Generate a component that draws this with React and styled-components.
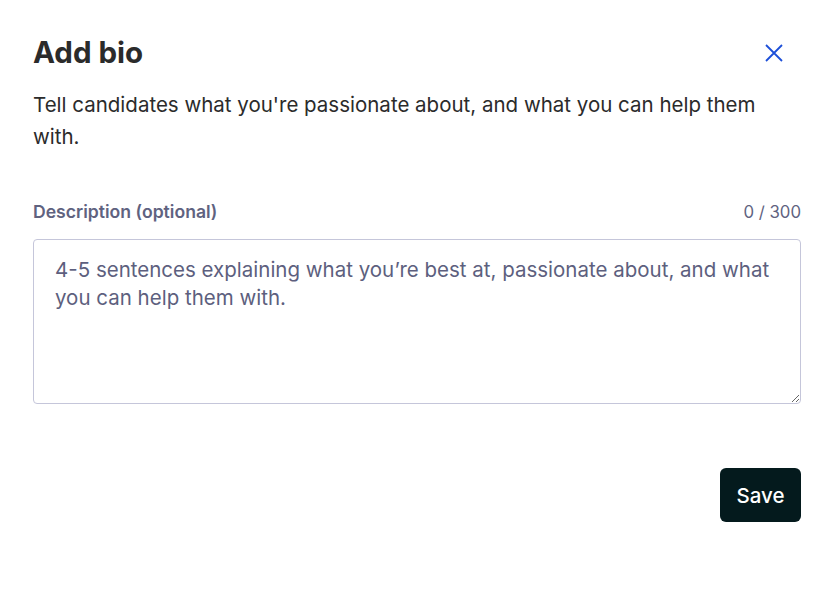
import React, { useState } from "react";
import styled, { createGlobalStyle } from "styled-components";

const GlobalStyle = createGlobalStyle`
  body {
    margin: 0;
    background: #ffffff;
    font-family: Inter, "Noto Sans", sans-serif;
  }
`;

const Modal = styled.div`
  width: 828px;
  height: 600px;
  box-sizing: border-box;
  padding: 30px 27px 0 33px;
  display: flex;
  flex-direction: column;
  background: #fff;
`;

const Header = styled.div`
  display: flex;
  align-items: center;
  justify-content: space-between;
  height: 44px;
`;

const Title = styled.h1`
  margin: 0;
  font-size: 29.5px;
  font-weight: 700;
  color: #2b2b2b;
`;

const CloseButton = styled.button`
  width: 28px;
  height: 28px;
  margin-right: 13px;
  margin-top: 2px;
  border: none;
  background: none;
  padding: 0;
  display: flex;
  align-items: center;
  justify-content: center;
  cursor: pointer;
`;

const Intro = styled.p`
  margin: 15px 0 0;
  font-size: 20.5px;
  line-height: 32px;
  color: #2b2b2b;
  max-width: 740px;
`;

const FieldHead = styled.div`
  display: flex;
  justify-content: space-between;
  align-items: baseline;
  margin-top: 45px;
`;

const Label = styled.label`
  font-size: 17.6px;
  font-weight: 600;
  color: #60627f;
`;

const Counter = styled.span`
  font-size: 16.8px;
  color: #60627f;
  margin-top: 4px;
`;

const TextArea = styled.textarea`
  margin-top: 17px;
  height: 165px;
  box-sizing: border-box;
  padding: 16px 21px;
  border: 1px solid #c5c6da;
  border-radius: 4px;
  font-family: Inter, "Noto Sans", sans-serif;
  font-size: 20.5px;
  line-height: 28px;
  color: #2b2b2b;
  resize: vertical;
  outline: none;
  &::placeholder {
    color: #5d5f7e;
  }
`;

const Actions = styled.div`
  display: flex;
  justify-content: flex-end;
  margin-top: 64px;
`;

const SaveButton = styled.button`
  width: 81px;
  height: 54px;
  border: none;
  border-radius: 6px;
  background: #041a1d;
  color: #ffffff;
  font-family: Inter, "Noto Sans", sans-serif;
  font-size: 20.5px;
  font-weight: 500;
  cursor: pointer;
`;

const App = () => {
  const [bio, setBio] = useState("");

  return (
    <>
      <GlobalStyle />
      <Modal>
        <Header>
          <Title>Add bio</Title>
          <CloseButton aria-label="Close">
            <svg width="20" height="20" viewBox="0 0 20 20" fill="none">
              <path d="M2 2L18 18M18 2L2 18" stroke="#1c4fd8" strokeWidth="1.8" />
            </svg>
          </CloseButton>
        </Header>
        <Intro>
          Tell candidates what you're passionate about, and what you can help them with.
        </Intro>
        <FieldHead>
          <Label htmlFor="bio">Description (optional)</Label>
          <Counter>{bio.length} / 300</Counter>
        </FieldHead>
        <TextArea
          id="bio"
          maxLength={300}
          value={bio}
          onChange={(e) => setBio(e.target.value)}
          placeholder="4-5 sentences explaining what you’re best at, passionate about, and what you can help them with."
        />
        <Actions>
          <SaveButton>Save</SaveButton>
        </Actions>
      </Modal>
    </>
  );
};

export default App;
